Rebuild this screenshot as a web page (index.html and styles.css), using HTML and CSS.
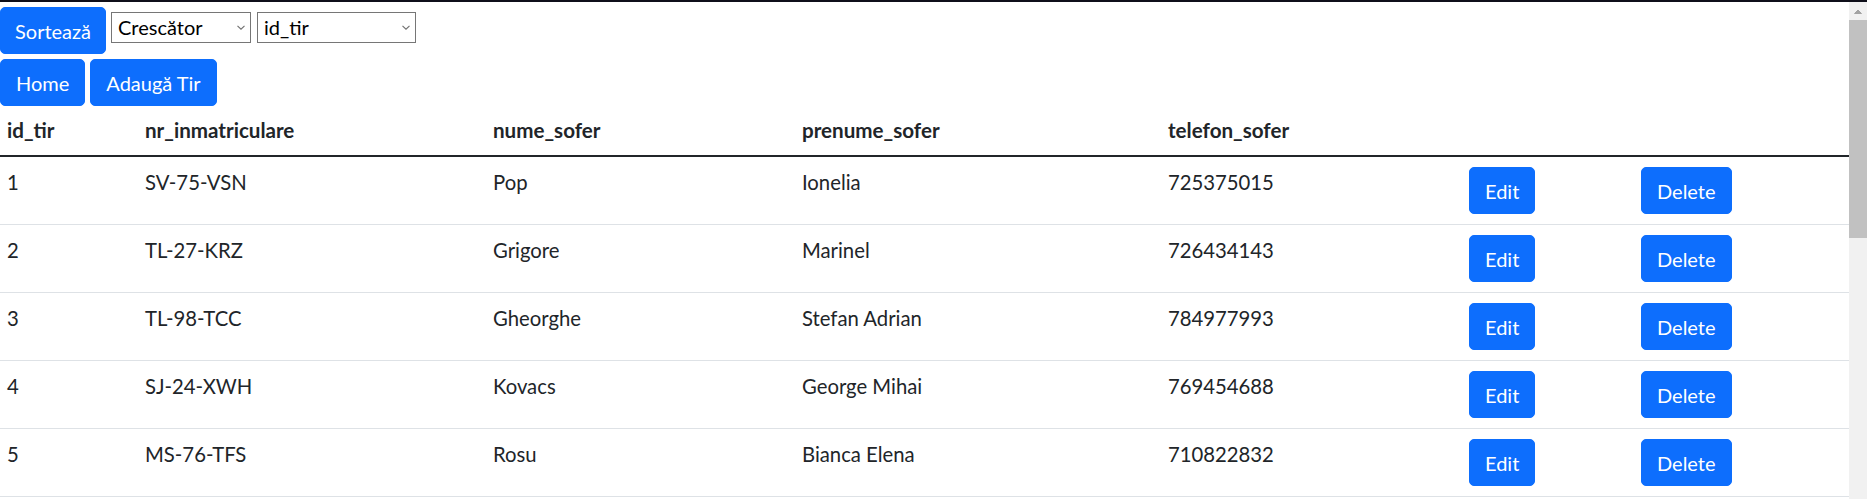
FILE: index.html
```html
<!DOCTYPE html>
<html lang="ro">
<head>
<meta charset="utf-8">
<title>Tiruri</title>
<link rel="stylesheet" href="styles.css">
</head>
<body>
<div class="topbar"></div>
<div class="frame">
  <main class="page">
    <form class="toolbar">
      <button type="button" class="btn btn-sort">Sortează</button>
      <select class="sel sel-order"><option>Crescător</option><option>Descrescător</option></select>
      <select class="sel sel-field"><option>id_tir</option><option>nr_inmatriculare</option></select>
    </form>
    <div class="toolbar second">
      <button type="button" class="btn">Home</button>
      <button type="button" class="btn">Adaugă Tir</button>
    </div>
    <table class="grid">
      <colgroup>
        <col class="c1"><col class="c2"><col class="c3"><col class="c4"><col class="c5"><col class="c6"><col class="c7">
      </colgroup>
      <thead>
        <tr><th>id_tir</th><th>nr_inmatriculare</th><th>nume_sofer</th><th>prenume_sofer</th><th>telefon_sofer</th><th></th><th></th></tr>
      </thead>
      <tbody>
        <tr><td>1</td><td>SV-75-VSN</td><td>Pop</td><td>Ionelia</td><td>725375015</td><td><button type="button" class="btn">Edit</button></td><td><button type="button" class="btn">Delete</button></td></tr>
        <tr><td>2</td><td>TL-27-KRZ</td><td>Grigore</td><td>Marinel</td><td>726434143</td><td><button type="button" class="btn">Edit</button></td><td><button type="button" class="btn">Delete</button></td></tr>
        <tr><td>3</td><td>TL-98-TCC</td><td>Gheorghe</td><td>Stefan Adrian</td><td>784977993</td><td><button type="button" class="btn">Edit</button></td><td><button type="button" class="btn">Delete</button></td></tr>
        <tr><td>4</td><td>SJ-24-XWH</td><td>Kovacs</td><td>George Mihai</td><td>769454688</td><td><button type="button" class="btn">Edit</button></td><td><button type="button" class="btn">Delete</button></td></tr>
        <tr><td>5</td><td>MS-76-TFS</td><td>Rosu</td><td>Bianca Elena</td><td>710822832</td><td><button type="button" class="btn">Edit</button></td><td><button type="button" class="btn">Delete</button></td></tr>
      </tbody>
    </table>
  </main>
  <aside class="scrollbar">
    <div class="sb-arrow">
      <svg width="18" height="18" viewBox="0 0 18 18"><path d="M5.5 11.5 L9 8 L12.5 11.5 Z" fill="#a3a3a3" stroke="#a3a3a3" stroke-width="1" stroke-linejoin="round"/></svg>
    </div>
    <div class="sb-thumb"></div>
    <div class="sb-track"></div>
  </aside>
</div>
</body>
</html>
```

FILE: styles.css
```css
html, body {
  margin: 0;
  padding: 0;
  height: 100%;
  overflow: hidden;
  background: #fff;
}
body {
  font-family: "Lato", "Segoe UI", sans-serif;
  font-size: 20px;
  line-height: 30px;
  color: #212529;
  display: flex;
  flex-direction: column;
}
.topbar {
  height: 2px;
  background: #0f0f1a;
  flex: none;
}
.frame {
  flex: 1;
  display: flex;
  min-height: 0;
}
.page {
  flex: 1;
  min-width: 0;
}
.scrollbar {
  width: 18px;
  flex: none;
  display: flex;
  flex-direction: column;
  background: #f1f1f1;
}
.sb-arrow {
  height: 18px;
  display: flex;
  align-items: center;
  justify-content: center;
}
.sb-thumb {
  height: 218px;
  background: #c1c1c1;
}
.sb-track {
  flex: 1;
}
.toolbar {
  display: flex;
  align-items: flex-start;
  gap: 5px;
  margin: 5px 0 0;
}
.toolbar.second {
  margin-top: 5px;
}
.btn {
  display: inline-flex;
  align-items: center;
  justify-content: center;
  box-sizing: border-box;
  height: 47px;
  padding: 0 15px;
  margin: 0;
  border: 1px solid #0d6efd;
  border-radius: 5px;
  background: #0d6efd;
  color: #fff;
  font-family: inherit;
  font-size: 20px;
  line-height: 30px;
  vertical-align: top;
  cursor: pointer;
}
.btn-sort {
  padding: 0 14px;
}
.sel {
  -webkit-appearance: none;
  appearance: none;
  box-sizing: border-box;
  height: 31px;
  margin: 5px 0 0;
  padding: 0 0 0 6px;
  border: 1px solid #767676;
  border-radius: 0;
  background-color: #fff;
  background-image: url("data:image/svg+xml;utf8,<svg xmlns='http://www.w3.org/2000/svg' width='8' height='5' viewBox='0 0 8 5'><path d='M0.5 0.8 L4 4.2 L7.5 0.8' fill='none' stroke='%23707070' stroke-width='1.1'/></svg>");
  background-repeat: no-repeat;
  background-position: right 5px center;
  font-family: inherit;
  font-size: 20px;
  line-height: 29px;
  color: #000;
}
.sel-order { width: 140px; }
.sel-field { width: 159px; margin-left: 1px; }

.grid {
  width: 100%;
  border-collapse: collapse;
  table-layout: fixed;
  margin: 0;
}
.c1 { width: 138px; }
.c2 { width: 348px; }
.c3 { width: 309px; }
.c4 { width: 366px; }
.c5 { width: 301px; }
.c6 { width: 172px; }
.grid th, .grid td {
  padding: 10px 7px;
  text-align: left;
  vertical-align: top;
  white-space: nowrap;
}
.grid th {
  font-size: 20.6px;
  font-weight: 700;
  line-height: 29px;
  border-bottom: 2px solid #212529;
}
.grid td {
  font-size: 20.3px;
  line-height: 30px;
  border-bottom: 1px solid #dee2e6;
}
```
